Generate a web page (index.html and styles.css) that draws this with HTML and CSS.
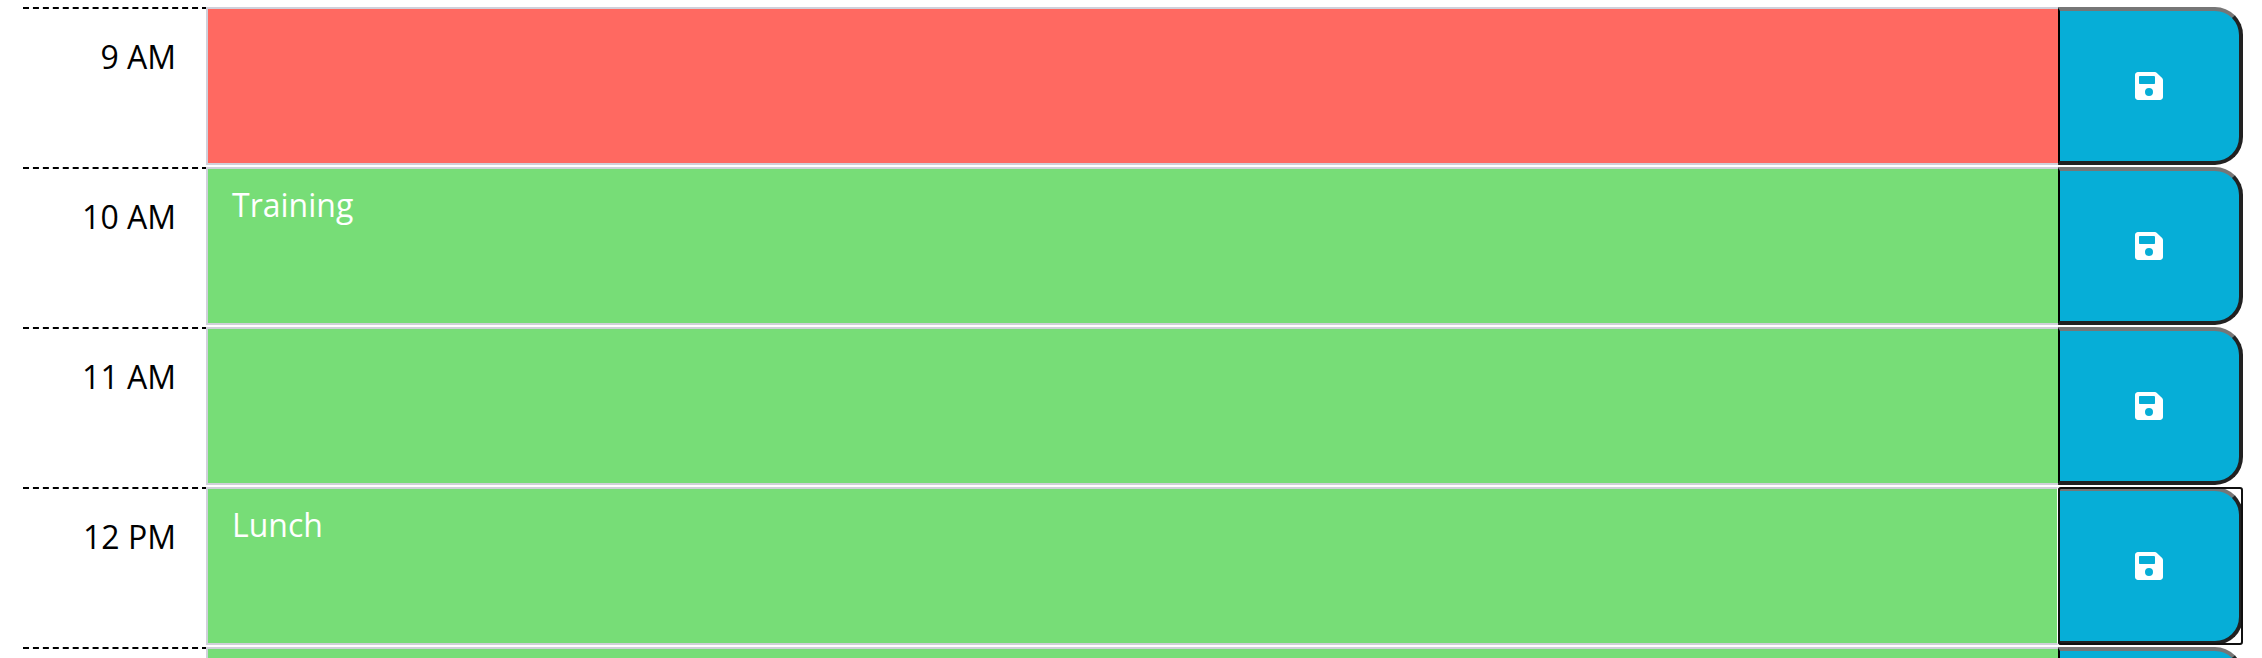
FILE: index.html
```html
<!DOCTYPE html>
<html lang="en">
<head>
<meta charset="utf-8">
<title>Work Day Scheduler</title>
<link rel="stylesheet" href="styles.css">
</head>
<body>
<svg class="sprite" aria-hidden="true">
  <symbol id="save" viewBox="0 0 448 448">
    <path fill-rule="evenodd" d="M433.9 97.9 350.1 14.1A48 48 0 0 0 316.1 0H48C21.5 0 0 21.5 0 48v352c0 26.500 21.500 48 48 48h352c26.500 0 48-21.500 48-48V131.900a48 48 0 0 0-14.100-34zM224 384a64 64 0 1 1 0-128 64 64 0 0 1 0 128zM320 79.500V180c0 6.600-5.400 12-12 12H76c-6.600 0-12-5.400-12-12V76c0-6.600 5.400-12 12-12h228.500c3.200 0 6.200 1.300 8.500 3.500l3.500 3.500a12 12 0 0 1 3.500 8.500z"/>
  </symbol>
</svg>
<main class="schedule">
  <div class="time-block">
    <label class="hour" for="h9">9 AM</label>
    <textarea class="entry present" id="h9"></textarea>
    <button class="save" type="button" aria-label="Save 9 AM"><svg class="icon"><use href="#save"/></svg></button>
  </div>
  <div class="time-block">
    <label class="hour" for="h10">10 AM</label>
    <textarea class="entry future" id="h10">Training</textarea>
    <button class="save" type="button" aria-label="Save 10 AM"><svg class="icon"><use href="#save"/></svg></button>
  </div>
  <div class="time-block">
    <label class="hour" for="h11">11 AM</label>
    <textarea class="entry future" id="h11"></textarea>
    <button class="save" type="button" aria-label="Save 11 AM"><svg class="icon"><use href="#save"/></svg></button>
  </div>
  <div class="time-block">
    <label class="hour" for="h12">12 PM</label>
    <textarea class="entry future" id="h12">Lunch</textarea>
    <button class="save active" type="button" aria-label="Save 12 PM"><svg class="icon"><use href="#save"/></svg></button>
  </div>
  <div class="time-block">
    <label class="hour" for="h13">1 PM</label>
    <textarea class="entry future" id="h13"></textarea>
    <button class="save" type="button" aria-label="Save 1 PM"><svg class="icon"><use href="#save"/></svg></button>
  </div>
</main>
</body>
</html>
```

FILE: styles.css
```css
* {
  box-sizing: border-box;
}

html {
  height: 100%;
  overflow: hidden;
}

body {
  margin: 0;
  background: #fff;
  color: #000;
  font-family: "Open Sans", sans-serif;
  font-size: 32px;
  line-height: 48px;
}

.sprite {
  display: none;
}

.schedule {
  display: flex;
  flex-direction: column;
  gap: 2px;
  padding: 7px 19px 0 23px;
}

.time-block {
  display: flex;
  min-height: 158px;
}

.hour {
  flex: 0 0 185px;
  padding: 24px 32px 0 0;
  border-top: 2px dashed #000;
  text-align: right;
}

.entry {
  position: relative;
  flex: 1;
  min-width: 0;
  margin: 0 0 0 -2px;
  padding: 12px 24px;
  border: 2px solid #d0d0da;
  border-right: 0;
  border-radius: 0;
  outline: 0;
  color: #fff;
  font: inherit;
  resize: none;
  overflow: hidden;
}

.present {
  background: #ff6961;
}

.future {
  background: #77dd77;
}

.save {
  position: relative;
  flex: 0 0 185px;
  display: flex;
  align-items: center;
  justify-content: center;
  padding: 0 1px 0 0;
  border: 4px solid #212121;
  border-top-color: #767676;
  border-left: 2px solid #000;
  border-radius: 0 28px 28px 0;
  background: #06aed7;
  color: #fff;
}

.save.active::after {
  content: "";
  position: absolute;
  inset: -4px -4px -4px -2px;
  border: 2px solid #101010;
  border-radius: 3px;
  box-shadow: 0 0 0 1px #fff;
}

.icon {
  width: 28px;
  height: 28px;
  fill: currentColor;
}
```
